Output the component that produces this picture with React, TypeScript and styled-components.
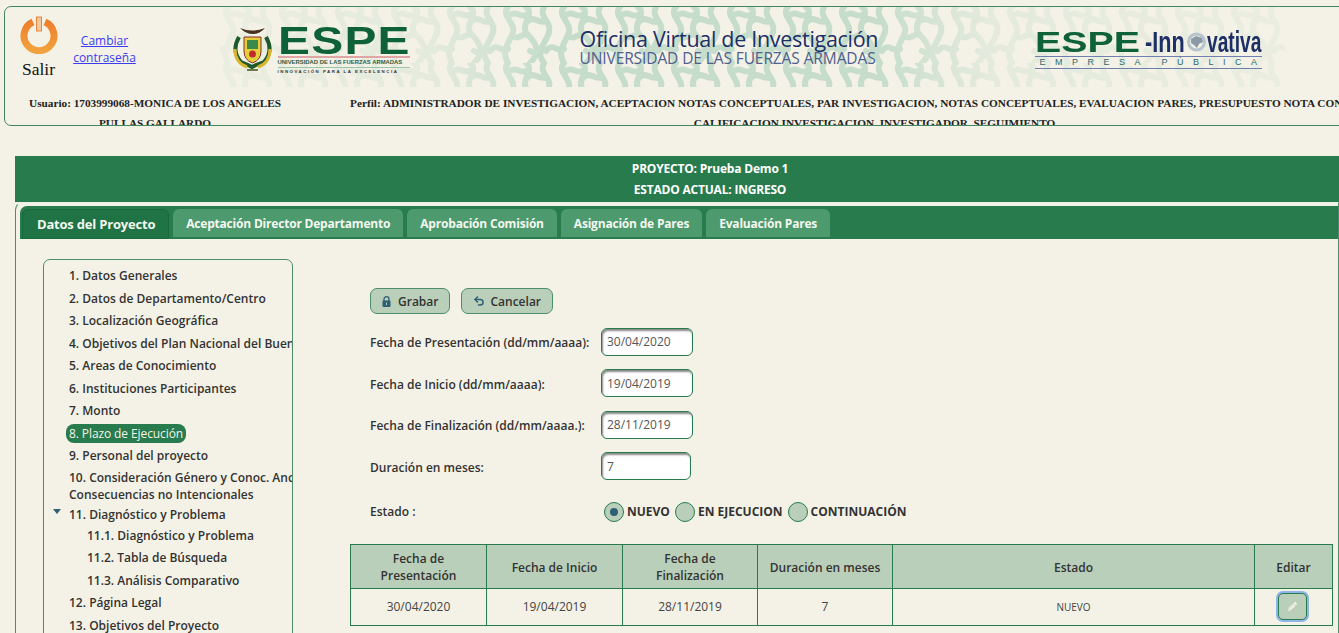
import React from "react";
import styled, { createGlobalStyle } from "styled-components";
import { FaPencilAlt } from "react-icons/fa";
import { Undo2 } from "lucide-react";

const GlobalStyle = createGlobalStyle`
  html, body {
    margin: 0;
    padding: 0;
    width: 1339px;
    height: 633px;
    overflow: hidden;
    background: #f4f2e6;
  }
  * { box-sizing: border-box; }
`;

const Page = styled.div`
  width: 1339px;
  height: 633px;
  overflow: hidden;
  padding: 6px 0 0 4px;
  font-family: "Open Sans", "Liberation Sans", sans-serif;
  color: #333;
`;

const Header = styled.header`
  width: 1345px;
  height: 120px;
  border: 1.5px solid #43875f;
  border-radius: 7px;
  overflow: hidden;
`;

const Banner = styled.div`
  position: relative;
  height: 80px;
  display: grid;
  grid-template-columns: 67px 65px 277.5px 620px 300px;
`;

const BannerPattern = styled.svg`
  position: absolute;
  left: 215px;
  top: 0;
  width: 1065px;
  height: 80px;
`;

const ExitCell = styled.a`
  position: relative;
  display: flex;
  flex-direction: column;
  align-items: center;
  padding-top: 8.5px;
  font: 17.5px/19px "Liberation Serif", serif;
  color: #111;
  gap: 6.5px;
`;

const PasswordLink = styled.a`
  position: relative;
  align-self: center;
  margin-top: 4px;
  text-align: center;
  font-size: 12px;
  line-height: 17px;
  color: #3b3bf0;
  text-decoration: underline;
`;

const EspeLogo = styled.div`
  position: relative;
  display: flex;
  gap: 3px;
  margin: 18.5px 0 0 92.5px;
`;

const EspeColumn = styled.div`
  width: 132px;
  display: flex;
  flex-direction: column;
`;

const EspeLetters = styled.div`
  font: 700 38px/30px "Liberation Sans", sans-serif;
  height: 30px;
  color: #0f6238;
  white-space: nowrap;
  letter-spacing: 1px;
  transform: scaleX(1.26);
  transform-origin: left top;
`;

const EspeUniversity = styled.div`
  border-top: 2px solid #e0a5a5;
  border-bottom: 1px solid #9cc4aa;
  font: 700 5.9px/9px "Liberation Sans", sans-serif;
  color: #2e5b42;
  white-space: nowrap;
`;

const EspeMotto = styled.div`
  font: 700 4.4px/8px "Liberation Sans", sans-serif;
  letter-spacing: 1.5px;
  color: #333;
  white-space: nowrap;
`;

const OfficeTitle = styled.div`
  position: relative;
  margin-top: 20.5px;
  padding-left: 165px;
  white-space: nowrap;
  color: #1d2f66;
`;

const OfficeMain = styled.div`
  font: 500 21.5px/22px "Open Sans", sans-serif;
  letter-spacing: -0.3px;
`;

const OfficeSub = styled.div`
  font: 400 15.5px/17px "Open Sans", sans-serif;
  letter-spacing: -0.1px;
  color: #4f5f8e;
`;

const InnovaLogo = styled.div`
  position: relative;
  margin-top: 22px;
  width: 227px;
  white-space: nowrap;
`;

const InnovaTop = styled.div`
  display: flex;
  align-items: center;
  height: 25px;
`;

const InnovaEspe = styled.span`
  width: 110px;
  font: 700 30px/25px "Liberation Sans", sans-serif;
  color: #0f6238;
  transform: scaleX(1.31);
  transform-origin: left;
`;

const InnovaWord = styled.span<{ $w: number; $scale: number }>`
  width: ${(p) => p.$w}px;
  font: 700 30px/25px "Liberation Sans", sans-serif;
  color: #1d2f66;
  transform: scaleX(${(p) => p.$scale});
  transform-origin: left;
`;

const InnovaSub = styled.div`
  margin-top: 2px;
  border-top: 1.5px solid #6f7fb0;
  border-bottom: 1.5px solid #6f7fb0;
  font: 400 9px/11px "Liberation Sans", sans-serif;
  letter-spacing: 9.5px;
  padding-left: 5px;
  color: #2a6a70;
`;

const UserRow = styled.div`
  display: grid;
  grid-template-columns: 300px 1070px;
  column-gap: 34.5px;
  font: 700 11.25px/20px "Liberation Serif", serif;
  color: #222;
  text-align: center;
  padding-top: 5.5px;
`;

const UserCell = styled.div<{ $pad?: number }>`
  padding: 0 ${(p) => p.$pad ?? 0}px;
`;

const ProjectBand = styled.div`
  margin: 30px 0 0 11px;
  height: 46px;
  background: #277b4d;
  color: #fff;
  font-size: 12px;
  font-weight: 700;
  letter-spacing: -0.2px;
  line-height: 21px;
  text-align: center;
  padding-top: 2px;
  padding-left: 66px;
`;

const TabPanel = styled.section`
  margin-left: 11px;
  height: 440px;
  border: 1px solid #4b8f6a;
  border-top-color: #e8efe4;
  border-radius: 8px 0 0 0;
  padding: 3px 0 0 4px;
`;

const TabBar = styled.div`
  display: flex;
  height: 33px;
  background: #277b4d;
  border-radius: 7px 0 0 0;
  gap: 4px;
  align-items: flex-end;
`;

const Tab = styled.div<{ $active?: boolean }>`
  height: ${(p) => (p.$active ? 30 : 28)}px;
  margin-bottom: ${(p) => (p.$active ? 0 : 2)}px;
  padding: ${(p) => (p.$active ? "0 13px 0 14px" : "0 13px")};
  margin-left: ${(p) => (p.$active ? "2px" : "0")};
  display: flex;
  align-items: center;
  border-radius: 6px 6px 0 0;
  background: ${(p) => (p.$active ? "#1f7345" : "#4c9a6e")};
  border: ${(p) => (p.$active ? "1px solid #16693b" : "none")};
  color: #f4f7ee;
  font-size: ${(p) => (p.$active ? 13 : 12)}px;
  font-weight: 700;
  letter-spacing: -0.2px;
  white-space: nowrap;
`;

const Content = styled.div`
  display: flex;
  padding: 20px 0 0 23px;
`;

const Sidebar = styled.nav`
  width: 250px;
  height: 400px;
  flex: none;
  border: 1.5px solid #4b8f6a;
  border-radius: 7px;
  padding-top: 5px;
  overflow: hidden;
`;

const NavRow = styled.div<{ $sub?: boolean }>`
  position: relative;
  padding-left: ${(p) => (p.$sub ? 43 : 25)}px;
  font-size: 12px;
  font-weight: 600;
  line-height: 22.5px;
  white-space: nowrap;
  color: #333;
`;

const NavDoubleRow = styled(NavRow)`
  line-height: 17px;
  margin: 1px 0 1px;
`;

const NavParentRow = styled(NavRow)`
  height: 21px;
  line-height: 21px;
`;

const ActiveLabel = styled.span`
  background: #277b4d;
  color: #f4f2e6;
  border-radius: 8px;
  padding: 1px 3px;
  margin-left: -3px;
  font-weight: 400;
  letter-spacing: -0.1px;
`;

const Caret = styled.span`
  position: absolute;
  left: 9px;
  top: 5px;
  width: 0;
  height: 0;
  border-left: 4px solid transparent;
  border-right: 4px solid transparent;
  border-top: 5px solid #2f5f73;
`;

const Main = styled.div`
  flex: 1;
  padding: 29px 0 0 57px;
`;

const ButtonRow = styled.div`
  display: flex;
  gap: 11px;
  margin: 0 0 7px 20px;
`;

const ActionButton = styled.button<{ $gap: number }>`
  height: 26px;
  padding: 0 11px;
  display: flex;
  align-items: center;
  gap: ${(p) => p.$gap}px;
  background: #b9cfb9;
  border: 1.5px solid #4b8f6a;
  border-radius: 7px;
  color: #333;
  font: 600 12px "Open Sans", sans-serif;

  svg {
    flex: none;
    color: #2f5f73;
  }
`;

const FormRow = styled.div`
  display: grid;
  grid-template-columns: 231px auto;
  align-items: center;
  height: 41.5px;
  margin-left: 20px;
  justify-content: start;
  font-size: 12px;
  font-weight: 600;
  color: #333;
`;

const StateRow = styled(FormRow)`
  margin-top: 3px;
`;

const FieldLabel = styled.span`
  padding-top: 2px;
`;

const DateBox = styled.div<{ $wide?: number }>`
  width: ${(p) => p.$wide ?? 92}px;
  height: 28px;
  border: 1px solid #277b4d;
  border-radius: 6px;
  background: #fff;
  box-shadow: inset 1px 2px 2px #888;
  padding: 0 5px;
  display: flex;
  align-items: center;
  font-weight: 400;
  color: #555;
`;

const RadioGroup = styled.div`
  display: flex;
  align-items: center;
  gap: 5px;
  margin-left: 3px;
  margin-top: 2px;
  font-weight: 700;
`;

const RadioOption = styled.span`
  display: flex;
  align-items: center;
  gap: 3px;
  white-space: nowrap;
`;

const RadioDot = styled.span<{ $on?: boolean }>`
  width: 20px;
  height: 20px;
  border-radius: 50%;
  border: 1.5px solid #277b4d;
  background: #b9cfb9;
  display: flex;
  align-items: center;
  justify-content: center;

  &::after {
    content: "";
    display: ${(p) => (p.$on ? "block" : "none")};
    width: 8px;
    height: 8px;
    border-radius: 50%;
    background: #2f5f73;
  }
`;

const DataTable = styled.table`
  width: 982px;
  margin-top: 12px;
  border-collapse: collapse;
  table-layout: fixed;
  font-size: 12px;
  color: #333;

  th, td {
    border: 1.5px solid #277b4d;
    text-align: center;
    padding: 0 10px;
  }

  th {
    height: 44px;
    padding-top: 2px;
    background: #b9cfb9;
    font-weight: 600;
    line-height: 17px;
  }

  td {
    height: 37px;
    font-weight: 400;
    color: #444;
  }
`;

const SmallCell = styled.td`
  font-size: 10px;
`;

const EditButton = styled.button`
  width: 29px;
  height: 27px;
  margin-left: -3px;
  vertical-align: middle;
  background: #b9cfb9;
  border: 1px solid #277b4d;
  border-radius: 5px;
  box-shadow: 0 0 0 2px #8fb4e8;
  color: #f4f2e6;
  padding: 0;

  svg {
    width: 9px;
    height: 9px;
  }
`;

function PowerIcon() {
  return (
    <svg width="38" height="38" viewBox="0 0 38 38" aria-hidden="true">
      <defs>
        <linearGradient id="pw" x1="0" y1="0" x2="0" y2="1">
          <stop offset="0" stopColor="#ee7f2c" />
          <stop offset="1" stopColor="#f2a23e" />
        </linearGradient>
      </defs>
      <path d="M13 6a15 15 0 1 0 12 0" fill="none" stroke="url(#pw)" strokeWidth="7" />
      <rect x="16.5" y="1" width="5" height="14" fill="#f3c9a0" stroke="#e8853a" />
    </svg>
  );
}

function LockIcon() {
  return (
    <svg width="9" height="11" viewBox="0 0 9 11" aria-hidden="true">
      <path d="M2 5V3.200a2.500 2.500 0 0 1 5 0V5" fill="none" stroke="currentColor" strokeWidth="1.300" />
      <rect x="0.500" y="4.500" width="8" height="6.500" rx="1" fill="currentColor" />
      <rect x="4" y="6.500" width="1" height="2.500" fill="#b9cfb9" />
    </svg>
  );
}

function Crest() {
  return (
    <svg width="45" height="46" viewBox="3 1 39 46" aria-hidden="true">
      <path d="M10 3q12 5 25 0q-5 6-12 6t-13-6z" fill="#4a3320" />
      <path d="M9 12q-8 14 2 25l7 3 4 2 4-2 8-3q10-11 2-25" fill="none" stroke="#1f5a2c" strokeWidth="4" />
      <path d="M5 24q0 14 12 18M40 24q0 14-12 18" fill="none" stroke="#d8b62e" strokeWidth="3" />
      <path d="M14 12h17v14q0 9-8.500 12q-8.500-3-8.500-12z" fill="#e2cf3a" stroke="#8a2c2c" />
      <rect x="17" y="15" width="11" height="9" fill="#3c8a4a" />
      <circle cx="22.500" cy="29" r="3.500" fill="#c22b2b" />
      <rect x="17" y="44" width="11" height="2" fill="#6a7a4a" />
    </svg>
  );
}

function GlobeMark() {
  return (
    <svg width="21" height="22" viewBox="0 0 21 22" aria-hidden="true">
      <circle cx="10.500" cy="11" r="8" fill="none" stroke="#b7c4cf" strokeWidth="3" />
      <path d="M5 8l5-3 6 2 1 4-4 2-2 4-3-3-3-2z" fill="#8c9aa8" />
    </svg>
  );
}

function WavePattern() {
  return (
    <BannerPattern viewBox="0 0 1065 80" aria-hidden="true">
      <defs>
        <pattern id="waves" width="56" height="56" patternUnits="userSpaceOnUse">
          <path
            d="M8 0c-8 10 10 16 4 28s-10 18-4 28M26 0c10 8-8 18 2 28s12 18 2 28M44 0c-6 12 10 14 4 28s-12 16-4 28M12 28c6 7 10-3 16 0M28 14c6-6 12 4 18 0M48 42c5-6 10 4 16 0M-8 42c5-6 10 4 16 0M10 8c6-5 10 3 16 0M30 44c6 5 10-4 16 0"
            fill="none"
            stroke="#c6ddcc"
            strokeWidth="6"
            strokeLinecap="round"
          />
        </pattern>
        <linearGradient id="fade" x1="0" x2="1" y1="0" y2="0">
          <stop offset="0" stopColor="#fff" stopOpacity="0.2" />
          <stop offset="0.2" stopColor="#fff" stopOpacity="0.35" />
          <stop offset="0.3" stopColor="#fff" stopOpacity="1" />
          <stop offset="0.62" stopColor="#fff" stopOpacity="1" />
          <stop offset="0.72" stopColor="#fff" stopOpacity="0.35" />
          <stop offset="1" stopColor="#fff" stopOpacity="0.2" />
        </linearGradient>
        <mask id="fadeMask">
          <rect width="1065" height="80" fill="url(#fade)" />
        </mask>
      </defs>
      <rect width="1065" height="80" fill="url(#waves)" mask="url(#fadeMask)" />
    </BannerPattern>
  );
}

const navBefore = [
  "1. Datos Generales",
  "2. Datos de Departamento/Centro",
  "3. Localización Geográfica",
  "4. Objetivos del Plan Nacional del Buen Vivir",
  "5. Areas de Conocimiento",
  "6. Instituciones Participantes",
  "7. Monto",
];

const subItems = ["11.1. Diagnóstico y Problema", "11.2. Tabla de Búsqueda", "11.3. Análisis Comparativo"];

const dateFields = [
  { label: "Fecha de Presentación (dd/mm/aaaa):", value: "30/04/2020" },
  { label: "Fecha de Inicio (dd/mm/aaaa):", value: "19/04/2019" },
  { label: "Fecha de Finalización (dd/mm/aaaa.):", value: "28/11/2019" },
];

const tabs = ["Aceptación Director Departamento", "Aprobación Comisión", "Asignación de Pares", "Evaluación Pares"];

export default function App() {
  return (
    <Page>
      <GlobalStyle />
      <Header>
        <Banner>
          <WavePattern />
          <ExitCell>
            <PowerIcon />
            Salir
          </ExitCell>
          <PasswordLink>Cambiar contraseña</PasswordLink>
          <EspeLogo>
            <Crest />
            <EspeColumn>
              <EspeLetters>ESPE</EspeLetters>
              <EspeUniversity>UNIVERSIDAD DE LAS FUERZAS ARMADAS</EspeUniversity>
              <EspeMotto>INNOVACIÓN PARA LA EXCELENCIA</EspeMotto>
            </EspeColumn>
          </EspeLogo>
          <OfficeTitle>
            <OfficeMain>Oficina Virtual de Investigación</OfficeMain>
            <OfficeSub>UNIVERSIDAD DE LAS FUERZAS ARMADAS</OfficeSub>
          </OfficeTitle>
          <InnovaLogo>
            <InnovaTop>
              <InnovaEspe>ESPE</InnovaEspe>
              <InnovaWord $w={41} $scale={0.72}>-Inn</InnovaWord>
              <GlobeMark />
              <InnovaWord $w={55} $scale={0.64}>vativa</InnovaWord>
            </InnovaTop>
            <InnovaSub>EMPRESA PÚBLICA</InnovaSub>
          </InnovaLogo>
        </Banner>
        <UserRow>
          <UserCell $pad={20}>Usuario: 1703999068-MONICA DE LOS ANGELES PULLAS GALLARDO</UserCell>
          <UserCell>
            Perfil: ADMINISTRADOR DE INVESTIGACION, ACEPTACION NOTAS CONCEPTUALES, PAR INVESTIGACION, NOTAS CONCEPTUALES, EVALUACION PARES, PRESUPUESTO NOTA CONCEPTUAL, CALIFICACION INVESTIGACION, INVESTIGADOR, SEGUIMIENTO
          </UserCell>
        </UserRow>
      </Header>

      <ProjectBand>
        <div>PROYECTO: Prueba Demo 1</div>
        <div>ESTADO ACTUAL: INGRESO</div>
      </ProjectBand>

      <TabPanel>
        <TabBar>
          <Tab $active>Datos del Proyecto</Tab>
          {tabs.map((t) => (
            <Tab key={t}>{t}</Tab>
          ))}
        </TabBar>
        <Content>
          <Sidebar>
            {navBefore.map((n) => (
              <NavRow key={n}>{n}</NavRow>
            ))}
            <NavRow>
              <ActiveLabel>8. Plazo de Ejecución</ActiveLabel>
            </NavRow>
            <NavRow>9. Personal del proyecto</NavRow>
            <NavDoubleRow>
              10. Consideración Género y Conoc. Ancestrales
              <br />
              Consecuencias no Intencionales
            </NavDoubleRow>
            <NavParentRow>
              <Caret />
              11. Diagnóstico y Problema
            </NavParentRow>
            {subItems.map((n) => (
              <NavRow key={n} $sub>
                {n}
              </NavRow>
            ))}
            <NavRow>12. Página Legal</NavRow>
            <NavRow>13. Objetivos del Proyecto</NavRow>
          </Sidebar>
          <Main>
            <ButtonRow>
              <ActionButton $gap={7}>
                <LockIcon />
                Grabar
              </ActionButton>
              <ActionButton $gap={5}>
                <Undo2 size={12} strokeWidth={3} />
                Cancelar
              </ActionButton>
            </ButtonRow>
            {dateFields.map((f) => (
              <FormRow key={f.label}>
                <FieldLabel>{f.label}</FieldLabel>
                <DateBox>{f.value}</DateBox>
              </FormRow>
            ))}
            <FormRow>
              <FieldLabel>Duración en meses:</FieldLabel>
              <DateBox $wide={90}>7</DateBox>
            </FormRow>
            <StateRow>
              <FieldLabel>Estado :</FieldLabel>
              <RadioGroup>
                <RadioOption>
                  <RadioDot $on />
                  NUEVO
                </RadioOption>
                <RadioOption>
                  <RadioDot />
                  EN EJECUCION
                </RadioOption>
                <RadioOption>
                  <RadioDot />
                  CONTINUACIÓN
                </RadioOption>
              </RadioGroup>
            </StateRow>
            <DataTable>
              <colgroup>
                <col width="136" />
                <col width="136" />
                <col width="135" />
                <col width="135" />
                <col width="362" />
                <col width="78" />
              </colgroup>
              <thead>
                <tr>
                  <th>Fecha de Presentación</th>
                  <th>Fecha de Inicio</th>
                  <th>Fecha de Finalización</th>
                  <th>Duración en meses</th>
                  <th>Estado</th>
                  <th>Editar</th>
                </tr>
              </thead>
              <tbody>
                <tr>
                  <td>30/04/2020</td>
                  <td>19/04/2019</td>
                  <td>28/11/2019</td>
                  <td>7</td>
                  <SmallCell>NUEVO</SmallCell>
                  <td>
                    <EditButton>
                      <FaPencilAlt />
                    </EditButton>
                  </td>
                </tr>
              </tbody>
            </DataTable>
          </Main>
        </Content>
      </TabPanel>
    </Page>
  );
}
